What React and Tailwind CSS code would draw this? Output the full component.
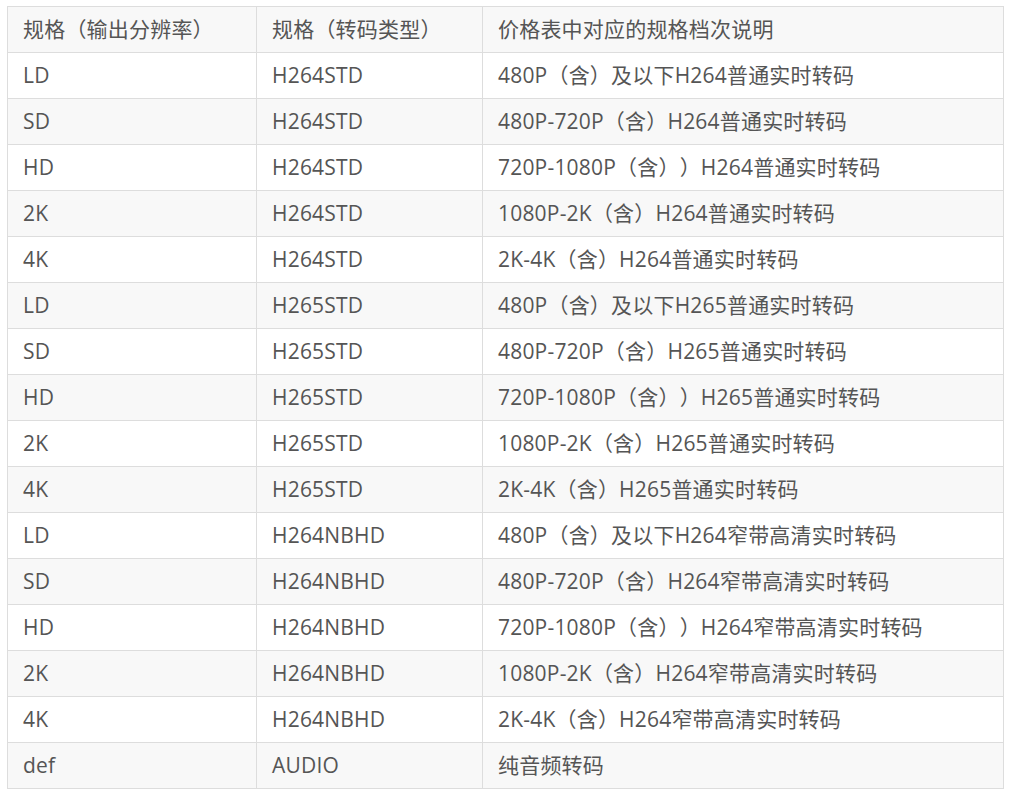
import React from 'react';

const rows = [
  ['LD', 'H264STD', '480P（含）及以下H264普通实时转码'],
  ['SD', 'H264STD', '480P-720P（含）H264普通实时转码'],
  ['HD', 'H264STD', '720P-1080P（含））H264普通实时转码'],
  ['2K', 'H264STD', '1080P-2K（含）H264普通实时转码'],
  ['4K', 'H264STD', '2K-4K（含）H264普通实时转码'],
  ['LD', 'H265STD', '480P（含）及以下H265普通实时转码'],
  ['SD', 'H265STD', '480P-720P（含）H265普通实时转码'],
  ['HD', 'H265STD', '720P-1080P（含））H265普通实时转码'],
  ['2K', 'H265STD', '1080P-2K（含）H265普通实时转码'],
  ['4K', 'H265STD', '2K-4K（含）H265普通实时转码'],
  ['LD', 'H264NBHD', '480P（含）及以下H264窄带高清实时转码'],
  ['SD', 'H264NBHD', '480P-720P（含）H264窄带高清实时转码'],
  ['HD', 'H264NBHD', '720P-1080P（含））H264窄带高清实时转码'],
  ['2K', 'H264NBHD', '1080P-2K（含）H264窄带高清实时转码'],
  ['4K', 'H264NBHD', '2K-4K（含）H264窄带高清实时转码'],
  ['def', 'AUDIO', '纯音频转码'],
];

const cell = 'border border-[#dddddd] px-[15px] pt-[1px] h-[46px] text-left font-normal align-middle whitespace-nowrap';

export default function App() {
  return (
    <div className="bg-white min-h-screen pt-[6px] pl-[7px] text-[#555555] text-[21px] tracking-[0.2px] [text-spacing-trim:space-all] font-['Open_Sans','Noto_Sans_CJK_SC',sans-serif]">
      <table className="table-fixed border-collapse w-[997px]">
        <colgroup>
          <col className="w-[249px]" />
          <col className="w-[226px]" />
          <col />
        </colgroup>
        <thead>
          <tr className="bg-[#f8f8f8]">
            <th className={cell}>规格（输出分辨率）</th>
            <th className={cell}>规格（转码类型）</th>
            <th className={cell}>价格表中对应的规格档次说明</th>
          </tr>
        </thead>
        <tbody>
          {rows.map((r, i) => (
            <tr key={i} className={i % 2 === 1 ? 'bg-[#f8f8f8]' : 'bg-white'}>
              <td className={cell}>{r[0]}</td>
              <td className={cell}>{r[1]}</td>
              <td className={cell}>{r[2]}</td>
            </tr>
          ))}
        </tbody>
      </table>
    </div>
  );
}
